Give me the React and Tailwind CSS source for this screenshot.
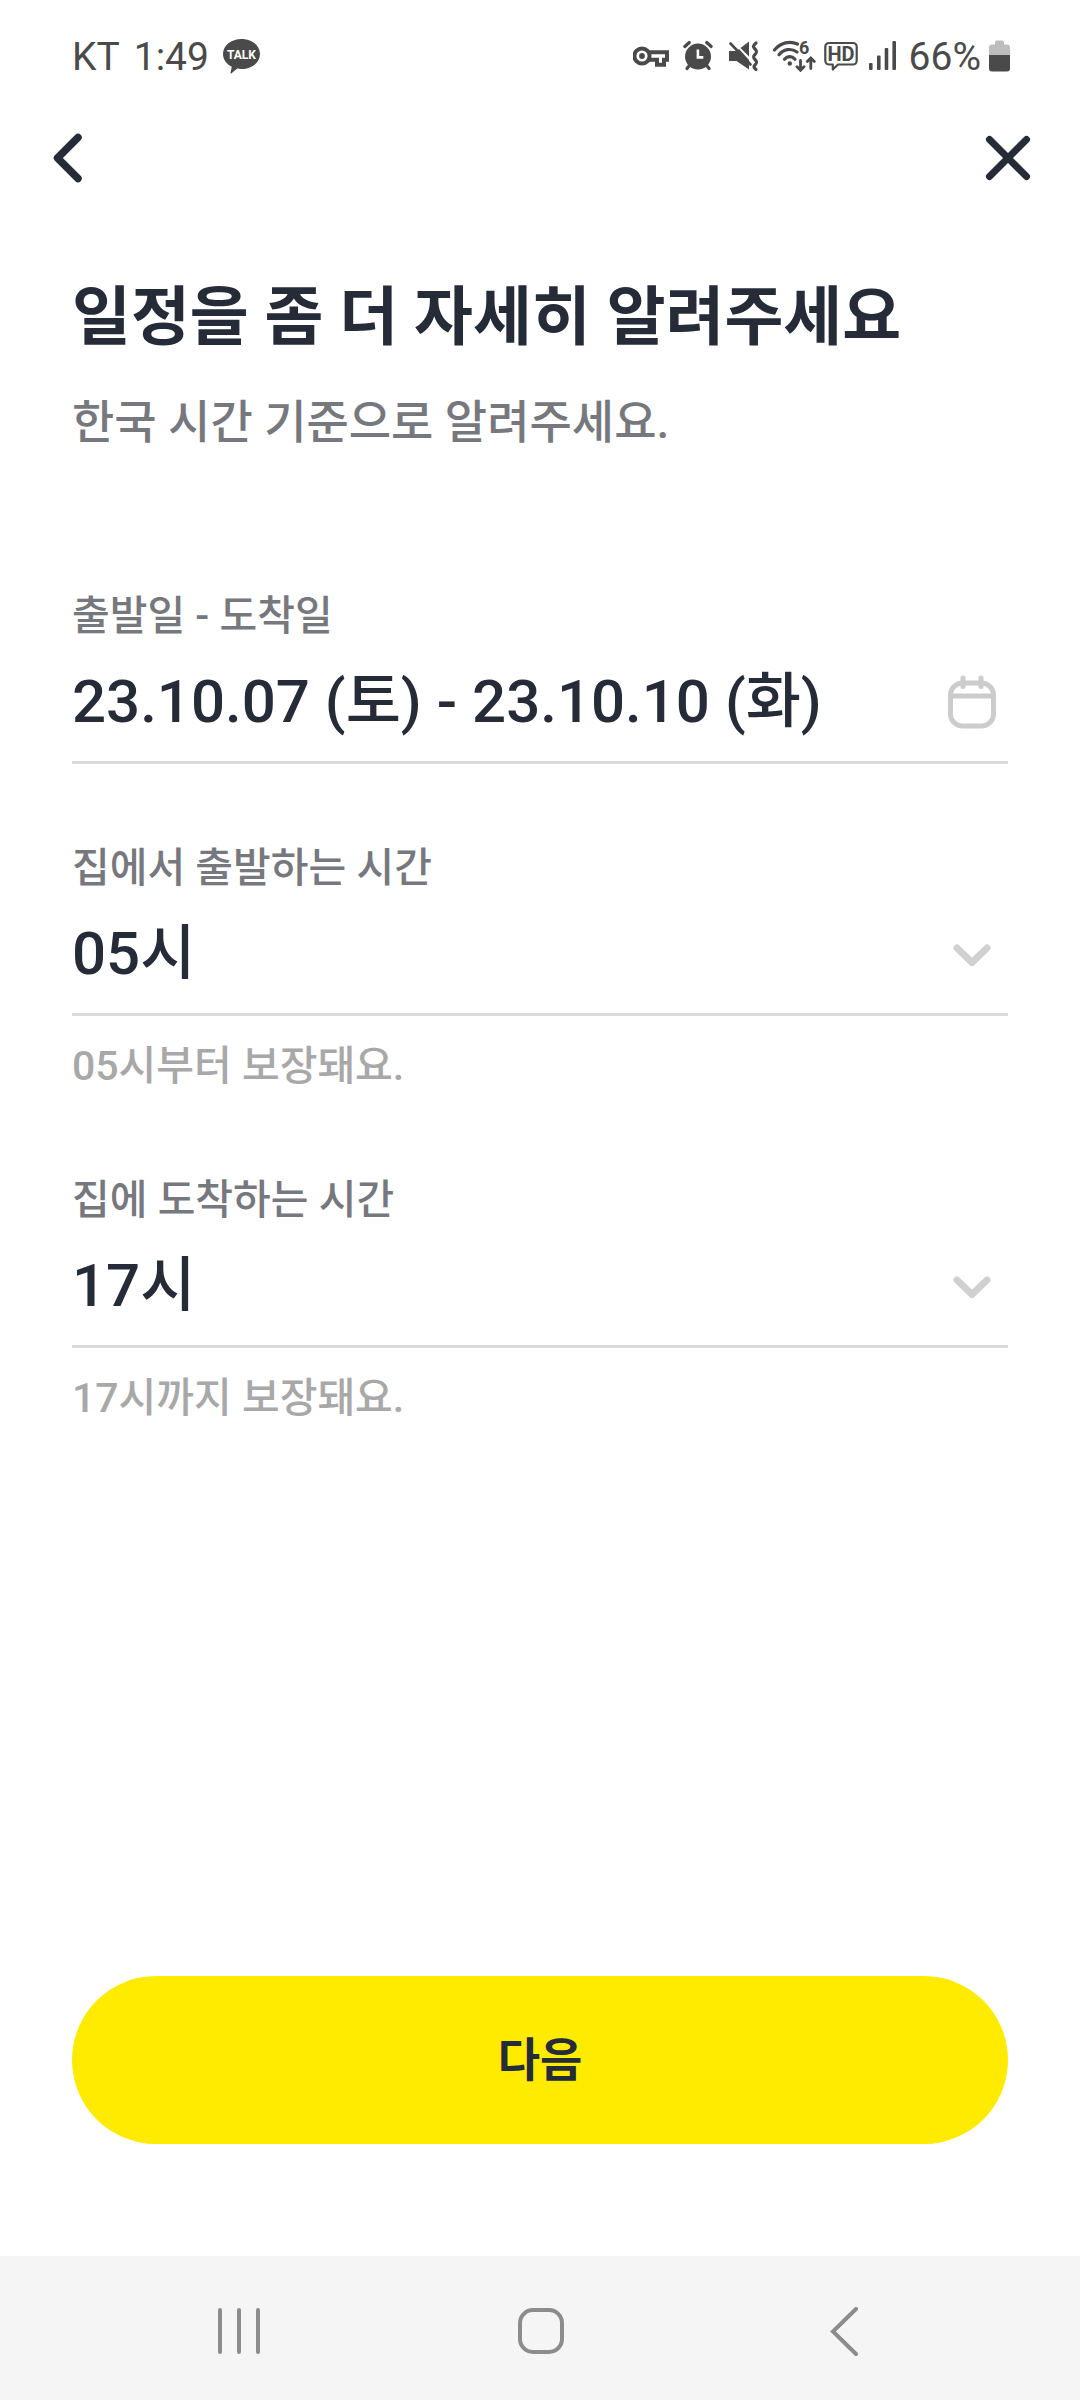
import { useState } from 'react';

const HOURS = Array.from({ length: 24 }, (_, i) => `${String(i).padStart(2, '0')}시`);

function KeyIcon() {
  return (
    <svg width="39" height="44" viewBox="0 0 39 44" fill="none" stroke="currentColor" strokeWidth="4">
      <circle cx="9" cy="21" r="7.6" />
      <circle cx="9" cy="21" r="2.9" fill="currentColor" stroke="none" />
      <path d="M16 17.2H34V24.8H31V29.8H24V24.8H16" />
    </svg>
  );
}

function AlarmIcon() {
  return (
    <svg width="36" height="44" viewBox="0 0 36 44" fill="none" stroke="currentColor" strokeWidth="3.2" strokeLinecap="round">
      <circle cx="18" cy="21.6" r="13" fill="currentColor" stroke="none" />
      <path d="M4.8 11.5L9.3 7.5M26.7 7.5L31.2 11.5M9.8 30L7 33.5M26.3 30L29.1 33.5" />
      <path d="M17.9 14.5V22.4H23.3" stroke="white" strokeWidth="2.6" strokeLinecap="butt" />
    </svg>
  );
}

function MuteIcon() {
  return (
    <svg width="39" height="44" viewBox="0 0 39 44" fill="currentColor">
      <path d="M5 16H12.500L15 14L25 25V34.5L12.5 26H5Z" />
      <path d="M16.5 13L25 6.5V21.5Z" />
      <path d="M6.5 8.5L26.5 29.5" stroke="currentColor" strokeWidth="2.6" strokeLinecap="round" />
      <path
        d="M32 8C28.5 11 29 12 31 14C33.5 16.5 33 17.5 31 19.5C29 21.5 29 22.5 31 24.5C33.5 27 33 28 31 30C29.5 31.5 29.5 32.5 32 34.5"
        fill="none"
        stroke="currentColor"
        strokeWidth="3.2"
        strokeLinecap="round"
      />
    </svg>
  );
}

function WifiIcon() {
  return (
    <svg width="45" height="44" viewBox="0 0 45 44" fill="none" stroke="currentColor" strokeWidth="3.2" strokeLinecap="round">
      <path d="M3.5 15C9.5 7.5 19 5.5 26.5 9" />
      <path d="M8 19.8C12.5 14 20 12.8 26 17" />
      <path d="M13.500 24.3C16.5 20.8 21 20.8 24 24.3" />
      <circle cx="18.8" cy="28.5" r="2.2" fill="currentColor" stroke="none" />
      <path d="M29.5 25.5V35M26 31.8L29.5 35.3L33 31.8M39.8 33.5V23.5M36.3 26.5L39.8 23L43.3 26.5" strokeWidth="2.8" />
      <text x="28" y="19" fontSize="18" fontWeight="700" fill="currentColor" stroke="none">6</text>
    </svg>
  );
}

function HdIcon() {
  return (
    <svg width="34" height="44" viewBox="0 0 34 44" fill="none" stroke="currentColor" strokeWidth="2.2">
      <path d="M5 8H29A3.7 3.7 0 0 1 32.7 11.7V25.8A3.7 3.7 0 0 1 29 29.5H14L8.8 34.5V29.5H5A3.7 3.7 0 0 1 1.3 25.8V11.7A3.7 3.7 0 0 1 5 8Z" strokeLinejoin="round" />
      <text x="17" y="26" fontSize="20" fontWeight="700" textAnchor="middle" fill="currentColor" stroke="none">HD</text>
    </svg>
  );
}

function SignalIcon() {
  return (
    <svg width="35" height="44" viewBox="0 0 35 44" fill="currentColor">
      <rect x="3" y="28" width="3.6" height="7" rx="1" />
      <rect x="11" y="20.5" width="3.6" height="14.5" rx="1" />
      <rect x="18.7" y="13" width="3.6" height="22" rx="1" />
      <rect x="26.4" y="6" width="3.6" height="29" rx="1" />
    </svg>
  );
}

function BatteryIcon() {
  return (
    <svg width="21" height="44" viewBox="0 0 21 44">
      <path d="M6 9.5V7A1.5 1.5 0 0 1 7.5 5.5H13.5A1.5 1.5 0 0 1 15 7V9.5H18A3 3 0 0 1 21 12.5V20H0V12.5A3 3 0 0 1 3 9.5Z" fill="#bdbdbd" />
      <path d="M0 20H21V33.5A3 3 0 0 1 18 36.5H3A3 3 0 0 1 0 33.5Z" fill="currentColor" />
    </svg>
  );
}

function TalkIcon() {
  return (
    <svg width="37" height="44" viewBox="0 0 37 44">
      <path d="M18.5 4C28.7 4 37 10.500 37 19C37 27.5 28.7 34 18.5 34C17 34 15.6 33.9 14.3 33.6L8.5 38.3C7.8 38.8 7.3 38.5 7.5 37.7L8.8 31.7C3.5 29.1 0 24.5 0 19C0 10.500 8.3 4 18.5 4Z" fill="currentColor" />
      <text x="18.5" y="24" fontSize="12" fontWeight="700" textAnchor="middle" fill="white">TALK</text>
    </svg>
  );
}

function CalendarIcon() {
  return (
    <svg width="72" height="72" viewBox="0 0 72 72" fill="none" stroke="currentColor" strokeWidth="5">
      <rect x="14.5" y="17" width="43" height="43" rx="12" />
      <path d="M14.5 30H57.5" />
      <path d="M27 12V20.5M45 12V20.5" strokeLinecap="round" />
    </svg>
  );
}

function StatusBar() {
  return (
    <div className="flex h-[114px] items-center justify-between pl-[72px] pr-[70px] text-[39px] leading-[44px] text-[#4a4a4a]">
      <div className="flex items-center gap-[14px]">
        <span>KT</span>
        <span>1:49</span>
        <TalkIcon />
      </div>
      <div className="flex items-center gap-2">
        <KeyIcon />
        <AlarmIcon />
        <MuteIcon />
        <WifiIcon />
        <HdIcon />
        <SignalIcon />
        <span>66%</span>
        <BatteryIcon />
      </div>
    </div>
  );
}

function Field({ id, label, helper, children }) {
  return (
    <div>
      <label htmlFor={id} className="block text-[41px] font-medium leading-[56px] text-[#76787e]">
        {label}
      </label>
      <div className="relative mt-[18px] border-b-[3px] border-[#dbdbdb] pb-[19px] text-[60px] font-medium leading-[80px] text-[#262b38]">
        {children}
      </div>
      {helper && <p className="mt-5 text-[41px] font-medium leading-[60px] text-[#a8a8a9]">{helper}</p>}
    </div>
  );
}

function HourField({ id, label, value, onChange, helper }) {
  return (
    <Field id={id} label={label} helper={helper}>
      <select
        id={id}
        value={value}
        onChange={(e) => onChange(e.target.value)}
        className="block h-[80px] w-full cursor-pointer appearance-none bg-transparent outline-none"
      >
        {HOURS.map((h) => (
          <option key={h} value={h}>{h}</option>
        ))}
      </select>
      <svg className="pointer-events-none absolute right-0 top-1 text-[#d0d0d0]" width="72" height="72" viewBox="0 0 72 72" fill="none" stroke="currentColor" strokeWidth="7" strokeLinecap="round" strokeLinejoin="round">
        <path d="M21 30L36 44.5L51 30" />
      </svg>
    </Field>
  );
}

export default function App() {
  const [period, setPeriod] = useState('23.10.07 (토) - 23.10.10 (화)');
  const [departure, setDeparture] = useState('05시');
  const [arrival, setArrival] = useState('17시');

  return (
    <div className="flex min-h-screen flex-col bg-white font-['Roboto','Noto_Sans_CJK_KR',sans-serif]" lang="ko">
      <StatusBar />

      <header className="flex items-center justify-between px-9 pt-2 text-[#262b38]">
        <button type="button" aria-label="뒤로" className="cursor-pointer">
          <svg width="72" height="72" viewBox="0 0 72 72" fill="none" stroke="currentColor" strokeWidth="7.5" strokeLinecap="round" strokeLinejoin="round">
            <path d="M42 15.5L21.5 36L42 56.5" />
          </svg>
        </button>
        <button type="button" aria-label="닫기" className="cursor-pointer">
          <svg width="72" height="72" viewBox="0 0 72 72" fill="none" stroke="currentColor" strokeWidth="7" strokeLinecap="round">
            <path d="M17.5 17.5L54.5 54.5M54.5 17.5L17.5 54.5" />
          </svg>
        </button>
      </header>

      <main className="flex flex-1 flex-col px-[72px] pb-[112px] pt-[82px]">
        <h1 className="text-[64px] font-bold leading-[84px] text-[#262b38]">일정을 좀 더 자세히 알려주세요</h1>
        <p className="mt-[30px] text-[46px] font-medium leading-[64px] text-[#76787e]">한국 시간 기준으로 알려주세요.</p>

        <form className="mt-[134px] flex flex-1 flex-col gap-[76px]" onSubmit={(e) => e.preventDefault()}>
          <Field id="period" label="출발일 - 도착일">
            <div className="flex h-[80px] items-center">
              <input
                id="period"
                type="text"
                value={period}
                onChange={(e) => setPeriod(e.target.value)}
                className="h-[80px] min-w-0 flex-1 bg-transparent outline-none"
              />
              <button type="button" aria-label="날짜 선택" className="cursor-pointer text-[#cccccc]">
                <CalendarIcon />
              </button>
            </div>
          </Field>
          <HourField
            id="departure"
            label="집에서 출발하는 시간"
            value={departure}
            onChange={setDeparture}
            helper={`${departure}부터 보장돼요.`}
          />
          <HourField
            id="arrival"
            label="집에 도착하는 시간"
            value={arrival}
            onChange={setArrival}
            helper={`${arrival}까지 보장돼요.`}
          />
          <button type="submit" className="mt-auto h-[168px] w-full cursor-pointer rounded-full bg-[#ffeb00] text-[46px] font-bold leading-[64px] text-[#262b38]">
            다음
          </button>
        </form>
      </main>

      <nav className="grid h-[144px] grid-cols-3 items-center justify-items-center bg-[#f5f5f5] px-[88px] pt-2 text-[#8c8c8c]">
        <button type="button" aria-label="최근 앱" className="cursor-pointer">
          <svg width="48" height="50" viewBox="0 0 48 50" fill="none" stroke="currentColor" strokeWidth="4" strokeLinecap="round">
            <path d="M5 3V45M24 3V45M43 3V45" />
          </svg>
        </button>
        <button type="button" aria-label="홈" className="cursor-pointer">
          <svg width="48" height="50" viewBox="0 0 48 50" fill="none" stroke="currentColor" strokeWidth="4">
            <rect x="4" y="3" width="42" height="42" rx="13" />
          </svg>
        </button>
        <button type="button" aria-label="이전" className="cursor-pointer">
          <svg width="48" height="50" viewBox="0 0 48 50" fill="none" stroke="currentColor" strokeWidth="4" strokeLinecap="round">
            <path d="M39 2L16 24.5L39 47" />
          </svg>
        </button>
      </nav>
    </div>
  );
}
